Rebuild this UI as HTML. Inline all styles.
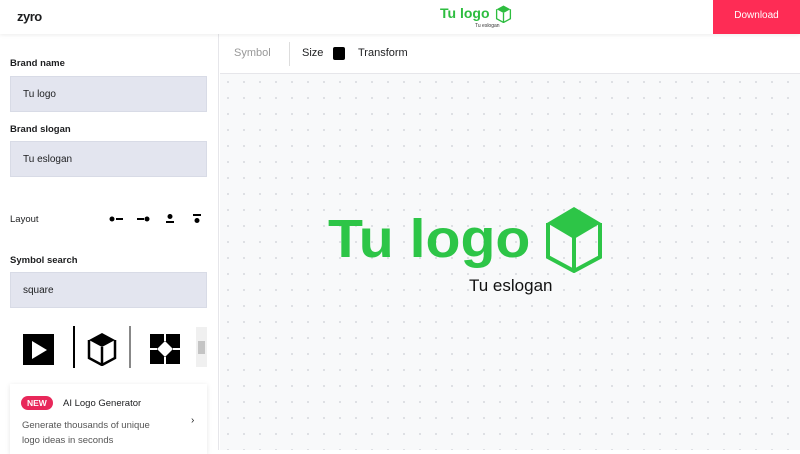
<!DOCTYPE html>
<html><head><style>
*{margin:0;padding:0;box-sizing:border-box}
body{width:800px;height:450px;overflow:hidden;font-family:"Liberation Sans",sans-serif;background:#fff;position:relative;color:#1d1e20}
.hdr{position:absolute;left:0;top:0;width:800px;height:34px;background:#fff;box-shadow:0 1px 4px rgba(0,0,0,.08);z-index:2}
.side{position:absolute;left:0;top:34px;width:219px;height:416px;background:#fff;border-right:1px solid #e6e6ea}
.canvas{position:absolute;left:220px;top:74px;width:580px;height:376px;background-color:#f8f9fa;background-image:radial-gradient(circle,#d9dbe0 0.8px,transparent 1.2px);background-size:16px 16px}
.tb{position:absolute;left:220px;top:34px;width:580px;height:40px;border-bottom:1px solid #e6e6ea;background:#fff;font-size:11px}
.lbl{position:absolute;left:10px;font-size:9.5px;font-weight:bold;color:#1d1e20}
.inp{position:absolute;left:10px;width:197px;height:36px;background:#e3e5ef;border:1px solid #d8dbe6;font-size:10px;padding:12px 12px}
</style></head><body>
<div class="hdr">
 <div style="position:absolute;left:17px;top:9px;font-weight:bold;font-size:13px;letter-spacing:-.5px">zyro</div>
 <div style="position:absolute;left:440px;top:5px;color:#2dbd3f;font-weight:bold;font-size:14px">Tu logo</div>
 <svg style="position:absolute;left:495px;top:5px" width="17" height="18" viewBox="0 0 58 68"><path d="M29 2 L55 16 L29 30 L3 16Z" fill="#2dbd3f"/><path d="M3 16 V52 L29 66 L55 52 V16" fill="none" stroke="#2dbd3f" stroke-width="5"/><path d="M29 30 V66" stroke="#2dbd3f" stroke-width="5"/></svg>
 <div style="position:absolute;left:475px;top:23px;font-size:5px;color:#333">Tu eslogan</div>
 <div style="position:absolute;left:713px;top:0;width:87px;height:34px;background:#fe2c55;color:#fff;font-size:10px;text-align:center;line-height:32px">Download</div>
</div>
<div class="side">
 <div class="lbl" style="top:24px">Brand name</div>
 <div class="inp" style="top:42px">Tu logo</div>
 <div class="lbl" style="top:90px">Brand slogan</div>
 <div class="inp" style="top:107px">Tu eslogan</div>
 <div class="lbl" style="top:180px;font-weight:normal">Layout</div>
 <svg style="position:absolute;left:108px;top:178px" width="100" height="14" viewBox="0 0 100 14">
  <circle cx="4" cy="7" r="2.5"/><rect x="8" y="6" width="7" height="2"/>
  <rect x="29" y="6" width="7" height="2"/><circle cx="39" cy="7" r="2.5"/>
  <circle cx="62" cy="4.5" r="2.5"/><rect x="58" y="9" width="8" height="2"/>
  <rect x="85" y="2" width="8" height="2"/><circle cx="89" cy="8.5" r="2.5"/>
 </svg>
 <div class="lbl" style="top:221px">Symbol search</div>
 <div class="inp" style="top:238px">square</div>
 <div style="position:absolute;left:23px;top:300px;width:31px;height:31px;background:#000"><div style="position:absolute;left:9px;top:7px;border-left:15px solid #fff;border-top:9px solid transparent;border-bottom:9px solid transparent"></div></div>
 <div style="position:absolute;left:73px;top:292px;width:2px;height:42px;background:#000"></div>
 <svg style="position:absolute;left:86px;top:298px" width="32" height="34" viewBox="0 0 58 68"><path d="M29 2 L55 16 L29 30 L3 16Z" fill="#000"/><path d="M3 16 V52 L29 66 L55 52 V16" fill="none" stroke="#000" stroke-width="5"/><path d="M29 30 V66" stroke="#000" stroke-width="5"/></svg>
 <div style="position:absolute;left:129px;top:292px;width:2px;height:42px;background:#888"></div>
 <svg style="position:absolute;left:150px;top:300px" width="30" height="30" viewBox="0 0 30 30"><path d="M0 0H30V30H0Z M15 7 L23 15 L15 23 L7 15Z" fill="#000" fill-rule="evenodd"/><path d="M15 0V7M15 23V30M0 15H7M23 15H30" stroke="#fff" stroke-width="2"/></svg>
 <div style="position:absolute;left:196px;top:293px;width:11px;height:40px;background:#f0f0f0"><div style="position:absolute;left:2px;top:14px;width:7px;height:13px;background:#c4c4c4"></div></div>
 <div style="position:absolute;left:10px;top:350px;width:197px;height:70px;background:#fff;box-shadow:0 1px 5px rgba(0,0,0,.1)">
  <div style="position:absolute;left:11px;top:12px;background:#e8285a;color:#fff;font-size:8.5px;font-weight:bold;border-radius:8px;padding:2px 6px">NEW</div>
  <div style="position:absolute;left:53px;top:14px;font-size:9.5px">AI Logo Generator</div>
  <div style="position:absolute;left:12px;top:34px;font-size:9.5px;color:#555;line-height:15px">Generate thousands of unique<br>logo ideas in seconds</div>
  <div style="position:absolute;left:181px;top:31px;font-size:10px">›</div>
 </div>
</div>
<div class="tb">
 <div style="position:absolute;left:14px;top:13px;color:#999">Symbol</div>
 <div style="position:absolute;left:69px;top:8px;width:1px;height:24px;background:#ddd"></div>
 <div style="position:absolute;left:82px;top:13px">Size</div>
 <div style="position:absolute;left:113px;top:13px;width:12px;height:13px;background:#000;border-radius:2px"></div>
 <div style="position:absolute;left:138px;top:13px">Transform</div>
</div>
<div class="canvas">
 <div style="position:absolute;left:108px;top:135px;color:#2dc547;font-weight:bold;font-size:54px;line-height:60px;transform:scaleX(1.06);transform-origin:left">Tu logo</div>
 <svg style="position:absolute;left:325px;top:131px" width="58" height="68" viewBox="0 0 58 68"><path d="M29 2 L56 18 L29 34 L2 18Z" fill="#2dc547"/><path d="M3 18 V52 L29 66 L55 52 V18" fill="none" stroke="#2dc547" stroke-width="4"/><path d="M29 30 V66" stroke="#2dc547" stroke-width="4"/></svg>
 <div style="position:absolute;left:249px;top:202px;font-size:17px;color:#111">Tu eslogan</div>
</div>
</body></html>
